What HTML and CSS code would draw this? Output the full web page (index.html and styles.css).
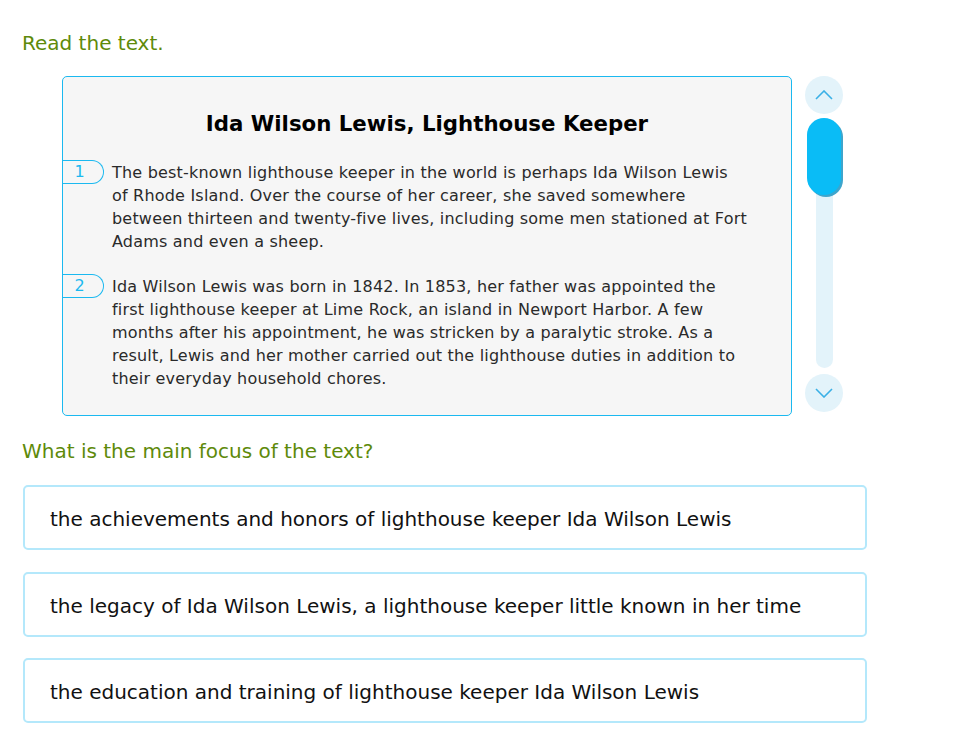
FILE: index.html
```html
<!DOCTYPE html>
<html>
<head>
<meta charset="utf-8">
<link rel="stylesheet" href="styles.css">
</head>
<body>
<div class="page">
  <h2 class="prompt">Read the text.</h2>
  <div class="passage-row">
    <div class="passage">
      <h3 class="title">Ida Wilson Lewis, Lighthouse Keeper</h3>
      <div class="para">
        <span class="num">1</span>
        <p>The best-known lighthouse keeper in the world is perhaps Ida Wilson Lewis<br>of Rhode Island. Over the course of her career, she saved somewhere between thirteen and twenty-five lives, including some men stationed at Fort Adams and even a sheep.</p>
      </div>
      <div class="para">
        <span class="num">2</span>
        <p>Ida Wilson Lewis was born in 1842. In 1853, her father was appointed the first lighthouse keeper at Lime Rock, an island in Newport Harbor. A few months after his appointment, he was stricken by a paralytic stroke. As a result, Lewis and her mother carried out the lighthouse duties in addition to their everyday household chores.</p>
      </div>
    </div>
    <div class="scroller">
      <div class="btn">
        <svg width="18" height="10" viewBox="0 0 18 10"><path d="M1 9 L9 1 L17 9" fill="none" stroke="#3ab0e6" stroke-width="1.6"/></svg>
      </div>
      <div class="track"><div class="thumb"></div></div>
      <div class="btn">
        <svg width="18" height="10" viewBox="0 0 18 10"><path d="M1 1 L9 9 L17 1" fill="none" stroke="#3ab0e6" stroke-width="1.6"/></svg>
      </div>
    </div>
  </div>
  <h2 class="prompt question">What is the main focus of the text?</h2>
  <div class="choices">
    <div class="choice">the achievements and honors of lighthouse keeper Ida Wilson Lewis</div>
    <div class="choice">the legacy of Ida Wilson Lewis, a lighthouse keeper little known in her time</div>
    <div class="choice">the education and training of lighthouse keeper Ida Wilson Lewis</div>
  </div>
</div>
</body>
</html>
```

FILE: styles.css
```css
* { box-sizing: border-box; }
html, body { margin: 0; padding: 0; background: #fff; }
body { font-family: "DejaVu Sans", Verdana, sans-serif; color: #000; }
.page { padding: 30px 0 0 22px; width: 870px; }
.prompt {
  margin: 0;
  font-size: 20px;
  font-weight: normal;
  color: #5e8a0a;
  line-height: 26px;
}
.passage-row {
  display: flex;
  align-items: flex-start;
  margin: 20px 0 0 40px;
}
.passage {
  width: 730px;
  height: 340px;
  background: #f6f6f6;
  border: 1px solid #1bb9f0;
  border-radius: 5px;
  padding: 32px 38px 0 0;
}
.title {
  margin: 0 0 22px 38px;
  text-align: center;
  font-size: 21.3px;
  line-height: 30px;
  font-weight: bold;
}
.para {
  display: flex;
  align-items: flex-start;
  margin-bottom: 22px;
}
.num {
  flex: none;
  width: 42px;
  height: 24px;
  margin: -1px 8px 0 -1px;
  border: 1px solid #1bb9f0;
  border-left: none;
  border-radius: 0 12px 12px 0;
  color: #1bb9f0;
  font-size: 16px;
  line-height: 22px;
  text-align: center;
  padding-right: 6px;
}
.para p {
  margin: 0;
  font-size: 16px;
  letter-spacing: 0.2px;
  line-height: 23px;
  color: #2a2a2a;
}
.scroller {
  margin-left: 13px;
  width: 38px;
  display: flex;
  flex-direction: column;
  align-items: center;
}
.btn {
  width: 38px;
  height: 38px;
  border-radius: 50%;
  background: #e3f3fa;
  display: flex;
  align-items: center;
  justify-content: center;
}
.track {
  width: 17px;
  height: 250px;
  margin: 4px 0 6px;
  background: #e3f3fa;
  border-radius: 9px;
  display: flex;
  justify-content: center;
}
.thumb {
  flex: none;
  width: 34px;
  height: 77px;
  background: #0abcf6;
  border-radius: 17px;
  box-shadow: 2px 2px 0 #3ea5cc;
}
.question { margin-top: 22px; }
.choices {
  margin-top: 21px;
  display: flex;
  flex-direction: column;
  gap: 21.5px;
  width: 844px;
  margin-left: 1px;
}
.choice {
  height: 65px;
  border: 2px solid #b4e8fb;
  border-radius: 5px;
  padding: 0 0 0 25px;
  font-size: 20px;
  line-height: 64px;
  color: #111;
}
```
